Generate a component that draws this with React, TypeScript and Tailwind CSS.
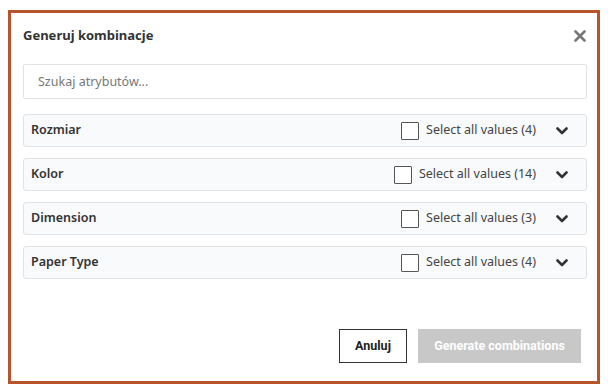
import { useState } from 'react';

const attributes = [
    { name: 'Rozmiar', count: 4 },
    { name: 'Kolor', count: 14 },
    { name: 'Dimension', count: 3 },
    { name: 'Paper Type', count: 4 },
];

function Chevron() {
    return (
        <svg width="12" height="8" viewBox="0 0 12 8" className="text-[#333]">
            <path d="M1.5 1.5 L6 6 L10.5 1.5" fill="none" stroke="currentColor" strokeWidth="2.6" strokeLinecap="round" strokeLinejoin="round" />
        </svg>
    );
}

export default function App() {
    const [query, setQuery] = useState('');
    const [checked, setChecked] = useState<Record<string, boolean>>({});

    return (
        <div className="w-[608px] h-[389px] bg-white pt-[10px] pl-[8px]" style={{ fontFamily: '"Noto Sans", Arial, sans-serif' }}>
            <div className="w-[592px] h-[374px] border-[3px] border-[#b9542a] bg-white flex flex-col pl-3 pr-[10px]">
                {/* Header */}
                <div className="flex items-center justify-between h-[45px] pt-[1px]">
                    <h2 className="text-[13px] font-bold text-[#333]">Generuj kombinacje</h2>
                    <button className="text-[#777] mr-[1px]">
                        <svg width="12" height="12" viewBox="0 0 12 12">
                            <path d="M1.5 1.5 L10.5 10.5 M10.5 1.5 L1.5 10.5" stroke="currentColor" strokeWidth="2.6" strokeLinecap="round" />
                        </svg>
                    </button>
                </div>

                {/* Search */}
                <div className="mt-[6px]">
                    <input
                        value={query}
                        onChange={(e) => setQuery(e.target.value)}
                        placeholder="Szukaj atrybutów..."
                        className="w-full h-[35px] px-[14px] text-[12.5px] text-[#333] placeholder:text-[#777] border border-[#e2e2e2] rounded-[2px] outline-none"
                    />
                </div>

                {/* Attributes */}
                <div className="mt-[15px] flex flex-col gap-[11px]">
                    {attributes.map((a) => (
                        <div key={a.name} className="h-[33px] flex items-center justify-between bg-[#f8fafb] border border-[#dfe3e6] rounded-[3px] pl-[7px] pr-[18px]">
                            <span className="text-[12.5px] font-semibold text-[#333]">{a.name}</span>
                            <div className="flex items-center">
                                <label className="flex items-center gap-[7px] cursor-pointer">
                                    <input
                                        type="checkbox"
                                        checked={!!checked[a.name]}
                                        onChange={() => setChecked({ ...checked, [a.name]: !checked[a.name] })}
                                        className="appearance-none w-[18px] h-[18px] border border-[#555] bg-white rounded-[1px]"
                                    />
                                    <span className="text-[12.5px] text-[#444]">Select all values ({a.count})</span>
                                </label>
                                <span className="ml-[20px] flex items-center">
                                    <Chevron />
                                </span>
                            </div>
                        </div>
                    ))}
                </div>

                {/* Actions */}
                <div className="mt-auto mb-[18px] flex justify-end gap-[11px] pr-[6px]" style={{ fontFamily: 'Roboto, Arial, sans-serif' }}>
                    <button className="h-[34px] w-[68px] border border-[#333] text-[12.5px] font-bold text-[#222] bg-white">
                        Anuluj
                    </button>
                    <button disabled className="h-[34px] w-[163px] bg-[#c8c8c8] text-[12.5px] font-bold text-white">
                        Generate combinations
                    </button>
                </div>
            </div>
        </div>
    );
}
